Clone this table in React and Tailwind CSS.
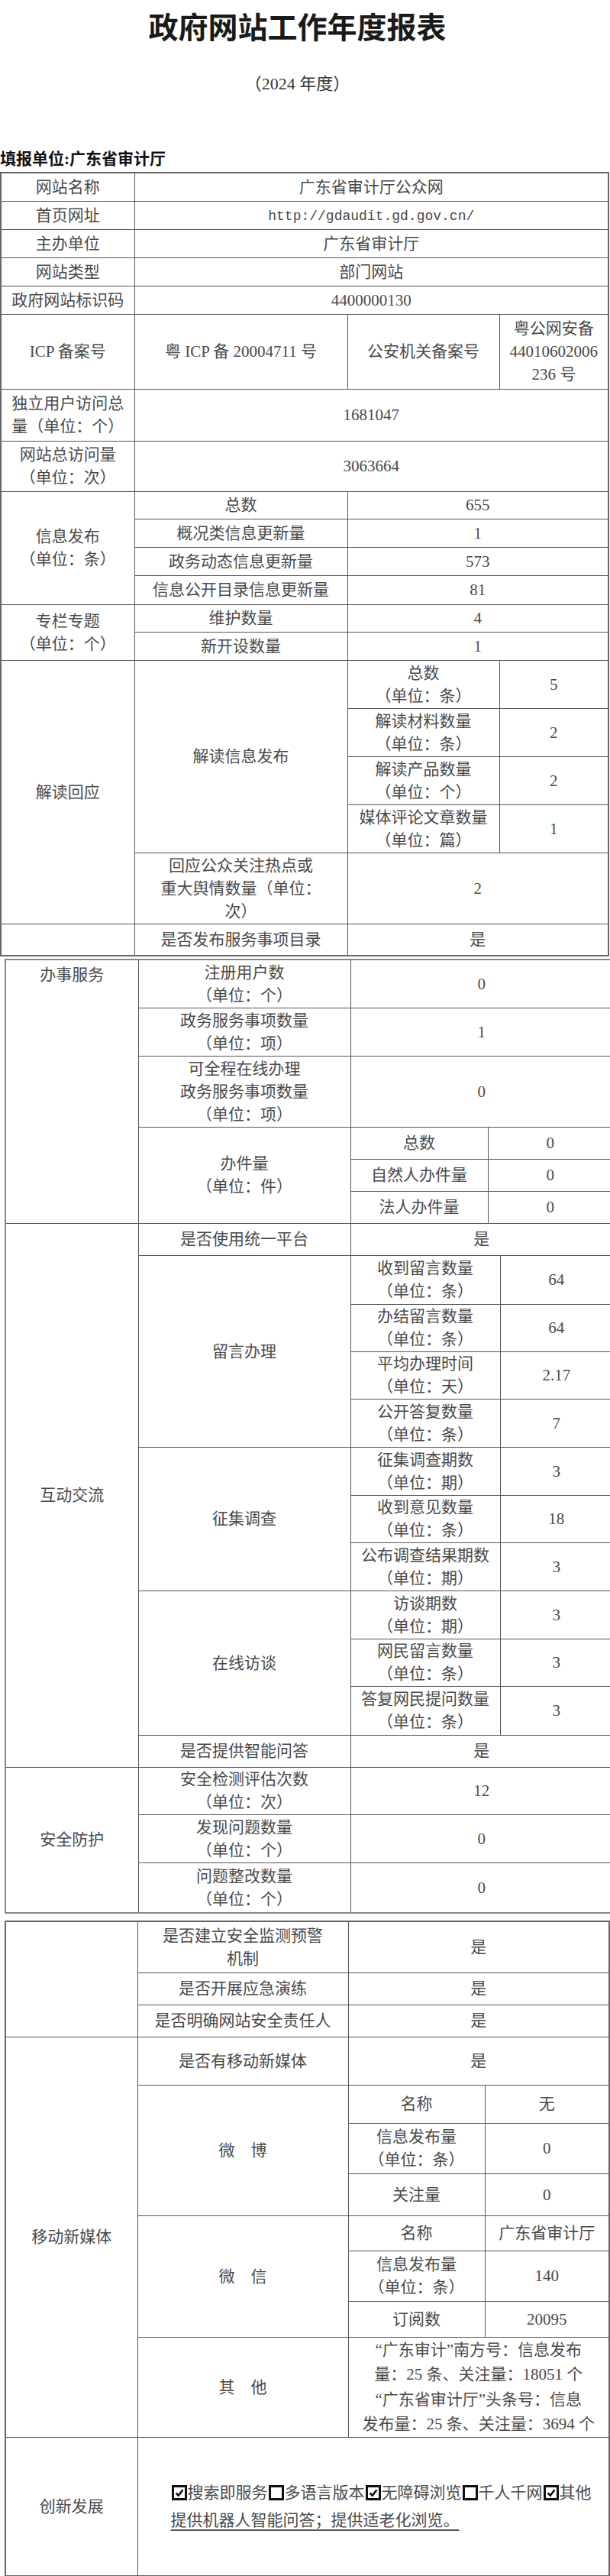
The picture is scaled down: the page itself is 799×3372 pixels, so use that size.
import React from 'react';

const FONT = { fontFamily: '"Liberation Serif", "Noto Sans CJK SC", serif' };

// plain bordered cell, centred text
function C({ children, cs, rs, top, className = '' }) {
    return (
        <td colSpan={cs} rowSpan={rs}
            className={`border border-[#555] px-[4px] text-center leading-[30px] text-[#4a4a4a] ${top ? 'align-top pt-[4px]' : 'align-middle'} ${className}`}>
            {children}
        </td>
    );
}

function Box({ checked }) {
    return (
        <span className="inline-block w-[20px] h-[20px] border-[3px] border-[#111] align-[-3px] mx-[1px] relative">
            {checked && (
                <svg viewBox="0 0 14 14" className="absolute inset-0 w-full h-full">
                    <path d="M2.5 7.5 L5.8 10.5 L11.5 3.2" fill="none" stroke="#111" strokeWidth="2.6" />
                </svg>
            )}
        </span>
    );
}

export default function App() {
    return (
        <div className="w-[799px] min-h-[3372px] overflow-hidden bg-white text-[21px]" style={FONT}>
            {/* Header */}
            <h1 className="pt-[15px] pr-[20px] text-center text-[39px] leading-[44px] font-bold text-[#1a1a1a]">政府网站工作年度报表</h1>
            <p className="mt-[36px] pr-[20px] text-center text-[22px] leading-[30px] text-[#333]">（2024 年度）</p>
            <p className="mt-[68px] text-[21px] leading-[30px] font-bold text-[#111] whitespace-nowrap">填报单位:广东省审计厅</p>

            {/* Table 1 */}
            <table className="mt-[2px] w-[796px] table-fixed border-collapse border-2 border-[#666]">
                <colgroup>
                    <col className="w-[175px]" />
                    <col className="w-[279px]" />
                    <col className="w-[199px]" />
                    <col className="w-[143px]" />
                </colgroup>
                <tbody>
                    <tr className="h-[37px]"><C>网站名称</C><C cs={3}>广东省审计厅公众网</C></tr>
                    <tr className="h-[37px]"><C>首页网址</C><C cs={3}><span className="text-[18px]" style={{ fontFamily: '"Liberation Mono", monospace' }}>http://gdaudit.gd.gov.cn/</span></C></tr>
                    <tr className="h-[37px]"><C>主办单位</C><C cs={3}>广东省审计厅</C></tr>
                    <tr className="h-[37px]"><C>网站类型</C><C cs={3}>部门网站</C></tr>
                    <tr className="h-[37px]"><C className="whitespace-nowrap">政府网站标识码</C><C cs={3}>4400000130</C></tr>
                    <tr className="h-[98px]">
                        <C>ICP 备案号</C>
                        <C>粤 ICP 备 20004711 号</C>
                        <C>公安机关备案号</C>
                        <C>粤公网安备<br />44010602006<br />236 号</C>
                    </tr>
                    <tr className="h-[68px]"><C>独立用户访问总<br />量（单位：个）</C><C cs={3}>1681047</C></tr>
                    <tr className="h-[66px]"><C>网站总访问量<br />（单位：次）</C><C cs={3}>3063664</C></tr>
                    <tr className="h-[36px]"><C rs={4}>信息发布<br />（单位：条）</C><C>总数</C><C cs={2}>655</C></tr>
                    <tr className="h-[37px]"><C>概况类信息更新量</C><C cs={2}>1</C></tr>
                    <tr className="h-[37px]"><C>政务动态信息更新量</C><C cs={2}>573</C></tr>
                    <tr className="h-[38px]"><C className="whitespace-nowrap">信息公开目录信息更新量</C><C cs={2}>81</C></tr>
                    <tr className="h-[36px]"><C rs={2}>专栏专题<br />（单位：个）</C><C>维护数量</C><C cs={2}>4</C></tr>
                    <tr className="h-[37px]"><C>新开设数量</C><C cs={2}>1</C></tr>
                    <tr className="h-[63px]"><C rs={5}>解读回应</C><C rs={4}>解读信息发布</C><C>总数<br />（单位：条）</C><C>5</C></tr>
                    <tr className="h-[63px]"><C>解读材料数量<br />（单位：条）</C><C>2</C></tr>
                    <tr className="h-[63px]"><C>解读产品数量<br />（单位：个）</C><C>2</C></tr>
                    <tr className="h-[63px]"><C className="whitespace-nowrap">媒体评论文章数量<br />（单位：篇）</C><C>1</C></tr>
                    <tr className="h-[93px]"><C>回应公众关注热点或<br />重大舆情数量（单位：<br />次）</C><C cs={2}>2</C></tr>
                    <tr className="h-[42px]"><C></C><C>是否发布服务事项目录</C><C cs={2}>是</C></tr>
                </tbody>
            </table>

            {/* Table 2 */}
            <table className="mt-[3px] ml-[6px] w-[796px] table-fixed border-collapse border-2 border-[#888]">
                <colgroup>
                    <col className="w-[174px]" />
                    <col className="w-[278px]" />
                    <col className="w-[180px]" />
                    <col className="w-[16px]" />
                    <col className="w-[148px]" />
                </colgroup>
                <tbody>
                    <tr className="h-[63px]"><C rs={6} top>办事服务</C><C>注册用户数<br />（单位：个）</C><C cs={3}>0</C></tr>
                    <tr className="h-[63px]"><C>政务服务事项数量<br />（单位：项）</C><C cs={3}>1</C></tr>
                    <tr className="h-[93px]"><C>可全程在线办理<br />政务服务事项数量<br />（单位：项）</C><C cs={3}>0</C></tr>
                    <tr className="h-[42px]"><C rs={3}>办件量<br />（单位：件）</C><C>总数</C><C cs={2}>0</C></tr>
                    <tr className="h-[42px]"><C>自然人办件量</C><C cs={2}>0</C></tr>
                    <tr className="h-[42px]"><C>法人办件量</C><C cs={2}>0</C></tr>

                    <tr className="h-[42px]"><C rs={12}>互动交流</C><C>是否使用统一平台</C><C cs={3}>是</C></tr>
                    <tr className="h-[64px]"><C rs={4}>留言办理</C><C cs={2}>收到留言数量<br />（单位：条）</C><C>64</C></tr>
                    <tr className="h-[62px]"><C cs={2}>办结留言数量<br />（单位：条）</C><C>64</C></tr>
                    <tr className="h-[62px]"><C cs={2}>平均办理时间<br />（单位：天）</C><C>2.17</C></tr>
                    <tr className="h-[63px]"><C cs={2}>公开答复数量<br />（单位：条）</C><C>7</C></tr>
                    <tr className="h-[63px]"><C rs={3}>征集调查</C><C cs={2}>征集调查期数<br />（单位：期）</C><C>3</C></tr>
                    <tr className="h-[62px]"><C cs={2}>收到意见数量<br />（单位：条）</C><C>18</C></tr>
                    <tr className="h-[63px]"><C cs={2} className="whitespace-nowrap">公布调查结果期数<br />（单位：期）</C><C>3</C></tr>
                    <tr className="h-[63px]"><C rs={3}>在线访谈</C><C cs={2}>访谈期数<br />（单位：期）</C><C>3</C></tr>
                    <tr className="h-[62px]"><C cs={2}>网民留言数量<br />（单位：条）</C><C>3</C></tr>
                    <tr className="h-[64px]"><C cs={2} className="whitespace-nowrap">答复网民提问数量<br />（单位：条）</C><C>3</C></tr>
                    <tr className="h-[42px]"><C>是否提供智能问答</C><C cs={3}>是</C></tr>

                    <tr className="h-[62px]"><C rs={3}>安全防护</C><C>安全检测评估次数<br />（单位：次）</C><C cs={3}>12</C></tr>
                    <tr className="h-[63px]"><C>发现问题数量<br />（单位：个）</C><C cs={3}>0</C></tr>
                    <tr className="h-[66px]"><C>问题整改数量<br />（单位：个）</C><C cs={3}>0</C></tr>
                </tbody>
            </table>

            {/* Table 3 */}
            <table className="mt-[9px] ml-[6px] w-[791px] table-fixed border-collapse border-2 border-[#666]">
                <colgroup>
                    <col className="w-[173px]" />
                    <col className="w-[276px]" />
                    <col className="w-[179px]" />
                    <col className="w-[163px]" />
                </colgroup>
                <tbody>
                    <tr className="h-[67px]"><C rs={3}></C><C>是否建立安全监测预警<br />机制</C><C cs={2}>是</C></tr>
                    <tr className="h-[42px]"><C>是否开展应急演练</C><C cs={2}>是</C></tr>
                    <tr className="h-[42px]"><C className="whitespace-nowrap">是否明确网站安全责任人</C><C cs={2}>是</C></tr>

                    <tr className="h-[63px]"><C rs={8}>移动新媒体</C><C>是否有移动新媒体</C><C cs={2}>是</C></tr>
                    <tr className="h-[50px]"><C rs={3}>微&emsp;博</C><C>名称</C><C>无</C></tr>
                    <tr className="h-[66px]"><C>信息发布量<br />（单位：条）</C><C>0</C></tr>
                    <tr className="h-[55px]"><C>关注量</C><C>0</C></tr>
                    <tr className="h-[46px]"><C rs={3}>微&emsp;信</C><C>名称</C><C className="whitespace-nowrap">广东省审计厅</C></tr>
                    <tr className="h-[66px]"><C>信息发布量<br />（单位：条）</C><C>140</C></tr>
                    <tr className="h-[47px]"><C>订阅数</C><C>20095</C></tr>
                    <tr className="h-[131px]">
                        <C>其&emsp;他</C>
                        <C cs={2} className="!leading-[32.5px] whitespace-nowrap">
                            “广东审计”南方号：信息发布<br />
                            量：25 条、关注量：18051 个<br />
                            “广东省审计厅”头条号：信息<br />
                            发布量：25 条、关注量：3694 个
                        </C>
                    </tr>

                    <tr className="h-[182px]">
                        <C>创新发展</C>
                        <td colSpan={3} className="border border-[#555] pl-[43px] pr-0 align-middle text-left leading-[36px] text-[#4a4a4a]">
                            <div className="whitespace-nowrap">
                                <Box checked />搜索即服务<Box />多语言版本<Box checked />无障碍浏览<Box />千人千网<Box checked />其他
                            </div>
                            <div className="whitespace-nowrap">
                                <span className="underline decoration-[#555] underline-offset-[5px]">提供机器人智能问答；提供适老化浏览。</span>
                            </div>
                        </td>
                    </tr>
                </tbody>
            </table>
        </div>
    );
}
